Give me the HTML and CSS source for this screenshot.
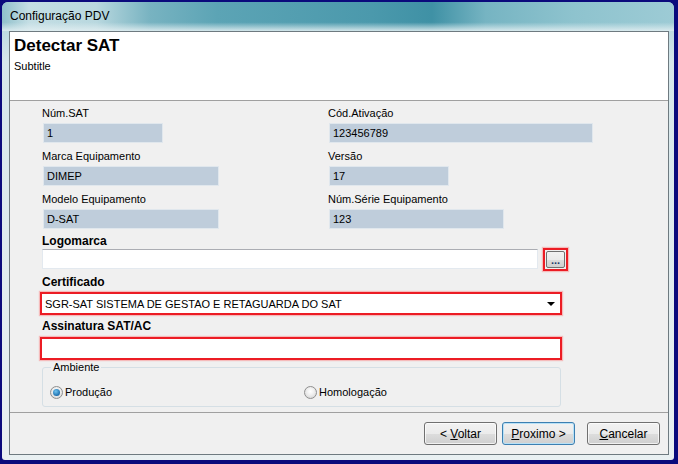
FILE: index.html
```html
<!DOCTYPE html>
<html lang="pt">
<head>
    <meta charset="UTF-8">
    <meta name="viewport" content="width=device-width, initial-scale=1.0">
    <title>Configuração PDV</title>
    <link rel="stylesheet" href="styles.css">
</head>
<body>
    <div class="window">
        <div class="titlebar">Configuração PDV</div>
        <div class="client">
            <div class="header">
                <h1>Detectar SAT</h1>
                <p>Subtitle</p>
            </div>
            <div class="form">
                <div class="grid">
                    <div class="field">
                        <label>Núm.SAT</label>
                        <div class="ro w120">1</div>
                    </div>
                    <div class="field">
                        <label>Cód.Ativação</label>
                        <div class="ro w264">123456789</div>
                    </div>
                    <div class="field">
                        <label>Marca Equipamento</label>
                        <div class="ro w176">DIMEP</div>
                    </div>
                    <div class="field">
                        <label>Versão</label>
                        <div class="ro w120">17</div>
                    </div>
                    <div class="field">
                        <label>Modelo Equipamento</label>
                        <div class="ro w176">D-SAT</div>
                    </div>
                    <div class="field">
                        <label>Núm.Série Equipamento</label>
                        <div class="ro w175">123</div>
                    </div>
                </div>

                <label class="b logo-label">Logomarca</label>
                <div class="logo-row">
                    <div class="text logo-input"></div>
                    <div class="mark small">
                        <button class="dots">...</button>
                    </div>
                </div>

                <label class="b cert-label">Certificado</label>
                <div class="mark wide select">
                    <span>SGR-SAT SISTEMA DE GESTAO E RETAGUARDA DO SAT</span>
                    <span class="arrow"></span>
                </div>

                <label class="b sign-label">Assinatura SAT/AC</label>
                <div class="mark wide sign"></div>

                <fieldset class="group">
                    <legend>Ambiente</legend>
                    <div class="radios">
                        <div class="radio-item"><span class="radio on"></span>Produção</div>
                        <div class="radio-item"><span class="radio"></span>Homologação</div>
                    </div>
                </fieldset>
            </div>
            <div class="footer">
                <button class="btn">&lt; <u>V</u>oltar</button>
                <button class="btn default"><u>P</u>roximo &gt;</button>
                <button class="btn cancel"><u>C</u>ancelar</button>
            </div>
        </div>
    </div>
</body>
</html>
```

FILE: styles.css
```css
body {
    margin: 0;
    background-color: #0a0a7c;
    font-family: "Liberation Sans", Arial, sans-serif;
    font-size: 11px;
    color: #000;
}
.window {
    margin: 2px 4px 4px 2px;
    height: 458px;
    border-radius: 6px 6px 3px 3px;
    background: linear-gradient(to bottom, #a8cfd8 0, #d6e7eb 60px, #e9f0f2 100%);
    display: flex;
    flex-direction: column;
}
.titlebar {
    height: 29px;
    line-height: 28px;
    padding-left: 8px;
    font-size: 12px;
    color: #000;
    border-radius: 6px 6px 0 0;
    background:
        linear-gradient(to bottom, rgba(255,255,255,0) 70%, rgba(225,238,241,0.9) 100%),
        linear-gradient(to right, #8fc0cb 0%, #c4dee4 4%, #b9d8df 14%, #78b3c1 22%, #5ca4b5 32%, #4b99ac 55%, #3f91a5 64%, #76b4c2 72%, #8ec3ce 85%, #9dcbd5 100%);
}
.client {
    margin: 0 5px 0 7px;
    height: 424px;
    box-sizing: border-box;
    border: 1px solid #6e7a80;
    background-color: #f0f0f0;
    display: flex;
    flex-direction: column;
}
.header {
    height: 68px;
    flex: none;
    background-color: #fff;
    border-bottom: 1px solid #a0a0a0;
    padding-left: 4px;
}
.header h1 {
    margin: 4px 0 0;
    font-size: 17px;
    line-height: 20px;
    font-weight: bold;
}
.header p {
    margin: 4px 0 0;
    line-height: 13px;
}
.form {
    height: 312px;
    flex: none;
    box-sizing: border-box;
    border-bottom: 1px solid #a0a0a0;
    padding: 5px 0 0 32px;
}
.grid {
    display: grid;
    grid-template-columns: 286px 1fr;
    row-gap: 6px;
}
.field label {
    display: block;
    line-height: 14px;
    margin-bottom: 3px;
}
.ro {
    height: 20px;
    box-sizing: border-box;
    margin-left: 1px;
    border: 1px solid #e0e7ed;
    background-color: #bfcddb;
    padding-left: 3px;
    line-height: 18px;
}
.w120 { width: 120px; }
.w176 { width: 176px; }
.w175 { width: 175px; }
.w264 { width: 264px; }

label.b {
    display: block;
    font-weight: bold;
    font-size: 12px;
    line-height: 15px;
}
.logo-label { margin-top: 5px; }
.cert-label { margin-top: 4px; margin-bottom: 2px; }
.sign-label { margin-top: 4px; margin-bottom: 3px; }

.logo-row {
    display: flex;
    align-items: flex-start;
}
.text {
    height: 20px;
    box-sizing: border-box;
    background-color: #fff;
    border: 1px solid #e3e9ef;
    border-top-color: #abadb3;
}
.logo-input { width: 496px; }
.mark {
    box-sizing: border-box;
    border: 2px solid #ec1c24;
    box-shadow: 0 0 1px 1px rgba(255, 90, 90, 0.35);
    background-color: #fff;
}
.mark.small {
    margin: -1px 0 0 5px;
    padding: 1px;
    background: none;
}
.dots {
    display: block;
    width: 19px;
    height: 17px;
    padding: 0;
    border: 1px solid #707070;
    border-radius: 2px;
    background: linear-gradient(to bottom, #f2f2f2 0%, #ebebeb 50%, #dddddd 51%, #cfcfcf 100%);
    font-family: "Liberation Sans", Arial, sans-serif;
    font-size: 11px;
    line-height: 17px;
    font-weight: bold;
    color: #1c3a6a;
}
.mark.wide {
    width: 522px;
    height: 23px;
    margin-left: -2px;
}
.select {
    display: flex;
    align-items: center;
    justify-content: space-between;
    padding: 0 5px 0 3px;
}
.arrow {
    width: 0;
    height: 0;
    border-left: 4px solid transparent;
    border-right: 4px solid transparent;
    border-top: 4px solid #000;
}

.group {
    margin: 1px 0 0;
    width: 519px;
    height: 46px;
    box-sizing: border-box;
    padding: 0 0 0 7px;
    border: 1px solid #d5dfe5;
    border-radius: 3px;
}
.group legend {
    padding: 0 2px;
    margin-left: 1px;
    line-height: 13px;
    color: #000;
}
.radios {
    display: grid;
    grid-template-columns: 254px 1fr;
    margin-top: 12px;
}
.radio-item {
    display: flex;
    align-items: center;
    gap: 2px;
    line-height: 13px;
}
.radio {
    width: 11px;
    height: 11px;
    border-radius: 50%;
    border: 1px solid #8f8f8f;
    background: radial-gradient(circle at 50% 40%, #ffffff 0, #f0f0f0 40%, #cfcfcf 100%);
    position: relative;
}
.radio.on::after {
    content: "";
    position: absolute;
    left: 2px;
    top: 2px;
    width: 7px;
    height: 7px;
    border-radius: 50%;
    background: radial-gradient(circle at 40% 35%, #6fc3f0 0, #1d6fae 70%, #0e4c86 100%);
}

.footer {
    flex: 1;
    display: flex;
    justify-content: flex-end;
    align-items: flex-start;
    padding: 9px 8px 0 0;
}
.btn {
    width: 73px;
    height: 23px;
    padding: 0;
    border: 1px solid #707070;
    border-radius: 3px;
    background: linear-gradient(to bottom, #f2f2f2 0%, #ebebeb 50%, #dddddd 51%, #cfcfcf 100%);
    box-shadow: inset 0 0 0 1px rgba(255, 255, 255, 0.7);
    font-family: "Liberation Sans", Arial, sans-serif;
    font-size: 12px;
    color: #000;
}
.btn.default {
    margin-left: 5px;
    border-color: #3c7fb1;
    box-shadow: inset 0 0 0 1px #b7e1f7;
}
.btn.cancel {
    margin-left: 12px;
}
```
